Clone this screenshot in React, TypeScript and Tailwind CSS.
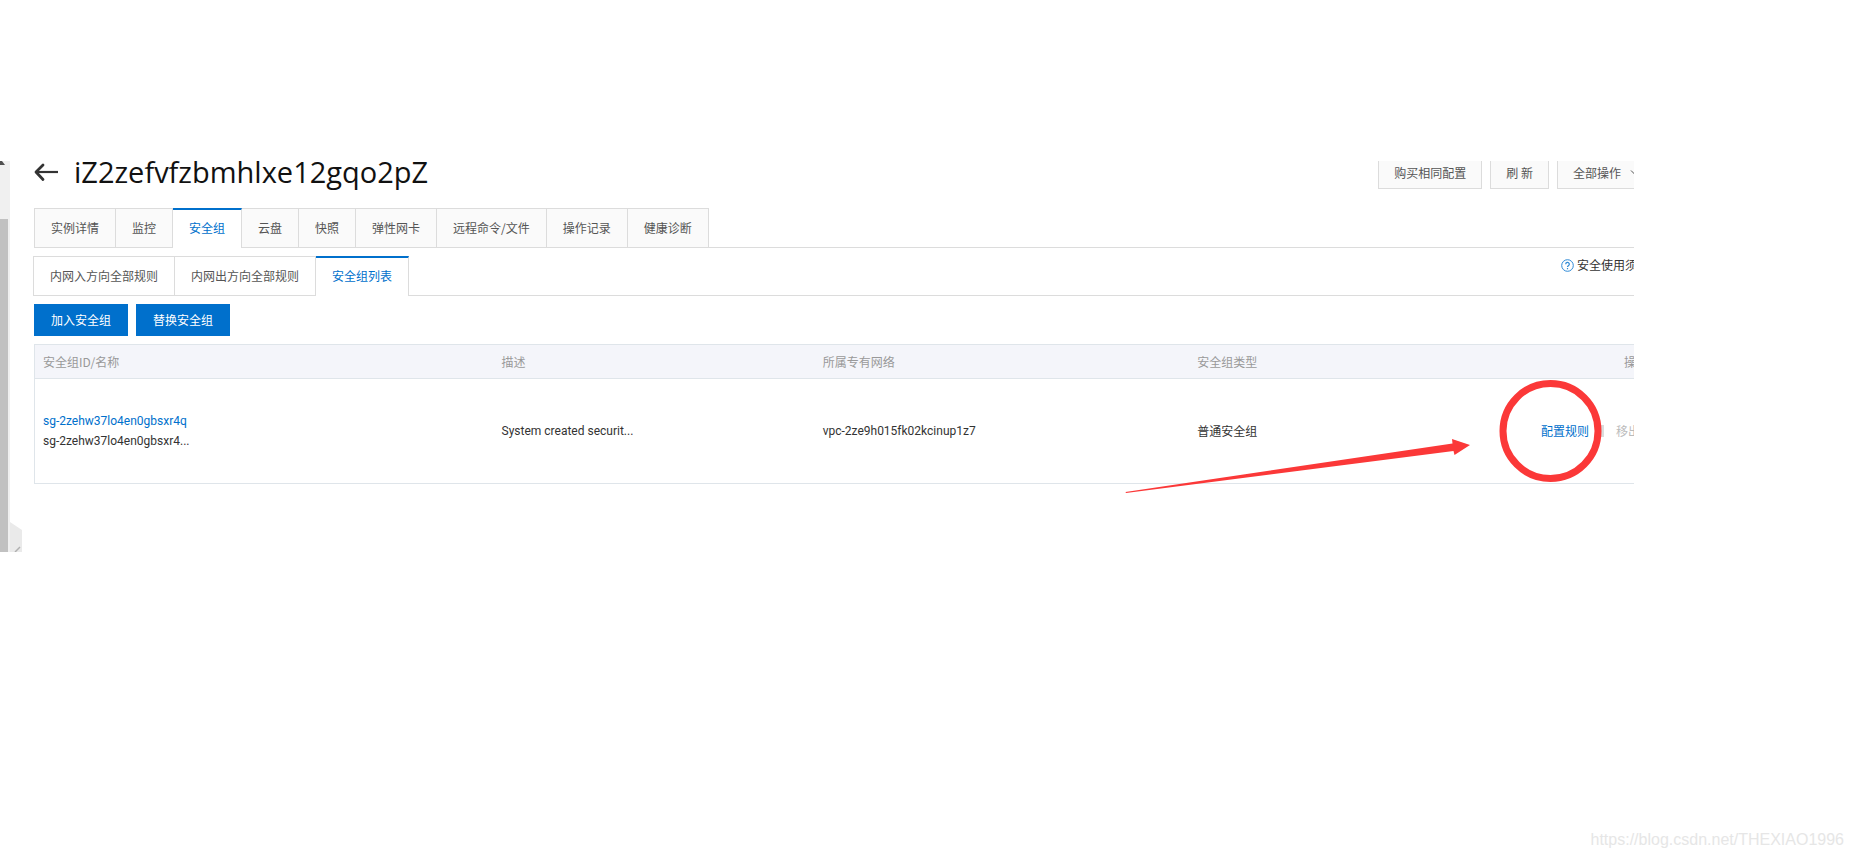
import { useState } from "react";
import clsx from "clsx";

const mainTabs = ["实例详情", "监控", "安全组", "云盘", "快照", "弹性网卡", "远程命令/文件", "操作记录", "健康诊断"];
const subTabs = ["内网入方向全部规则", "内网出方向全部规则", "安全组列表"];

const groups = [
    {
        id: "sg-2zehw37lo4en0gbsxr4q",
        name: "sg-2zehw37lo4en0gbsxr4...",
        desc: "System created securit...",
        vpc: "vpc-2ze9h015fk02kcinup1z7",
        type: "普通安全组",
    },
];

type TabsProps = {
    items: string[];
    active: string;
    onChange: (item: string) => void;
    plain?: boolean;
};

// Tab bar, the active tab covers the bottom line
const Tabs = ({ items, active, onChange, plain }: TabsProps) => (
    <div role="tablist" className={clsx("flex h-10 border-b border-[#dcdcdc]", plain && "-ml-px")}>
        {items.map((item) => (
            <button
                key={item}
                role="tab"
                aria-selected={item === active}
                onClick={() => onChange(item)}
                className={clsx(
                    "h-10 border-r border-[#dcdcdc] px-4 first:border-l",
                    item === active
                        ? "border-t-2 border-t-[#0070cc] bg-white pb-0.5 text-[#0070cc]"
                        : "border-y text-[#555]",
                    item !== active && (plain ? "bg-white" : "bg-[#fafafa]")
                )}
            >
                {item}
            </button>
        ))}
    </div>
);

// Left scrollbar and the collapse handle of the side menu
const SideRail = () => (
    <div className="flex w-[22px] shrink-0">
        <div className="flex w-[10px] flex-col bg-[#f0f0f0]">
            <svg width="10" height="58" className="shrink-0" aria-hidden="true">
                <path d="M0 0h2l3 4H0z" fill="#505050" />
            </svg>
            <div className="w-2 grow bg-[#c1c1c1]" />
        </div>
        <svg width="12" height="30" className="self-end" aria-hidden="true">
            <path d="M0 0l12 8v22H0z" fill="#eaeaea" />
            <path d="M5 30l5-5" stroke="#b0b0b0" strokeWidth="1.5" />
        </svg>
    </div>
);

const Header = () => (
    <header className="flex h-[47px] justify-between">
        <div className="flex items-start">
            <a href="#back" aria-label="返回" className="mt-0.5 mr-[15px]">
                <svg width="25" height="19" viewBox="0 0 25 19" fill="none">
                    <path d="M9 2L2 9l7 7.500" stroke="#333" strokeWidth="2.800" strokeLinecap="round" strokeLinejoin="round" />
                    <path d="M3 9h21" stroke="#333" strokeWidth="2.200" />
                </svg>
            </a>
            <h1 className="-mt-[9px] font-['Open_Sans',sans-serif] text-[29px] leading-10 text-[#111]">iZ2zefvfzbmhlxe12gqo2pZ</h1>
        </div>
        <div className="-mt-1 flex gap-2 text-[#555]">
            <button className="h-8 border border-[#dcdcdc] bg-[#fafafa] px-[15px]">购买相同配置</button>
            <button className="h-8 border border-[#dcdcdc] bg-[#fafafa] px-[15px]">刷 新</button>
            <button className="flex h-8 items-center gap-2 border border-[#dcdcdc] bg-[#fafafa] px-[15px]">
                全部操作
                <svg width="12" height="8" viewBox="0 0 12 8" fill="none" stroke="#555" aria-hidden="true">
                    <path d="M2 1.500l4 4 4-4" />
                </svg>
            </button>
        </div>
    </header>
);

const GroupTable = () => (
    <table className="w-full table-fixed border border-[#dfe5ea] text-left">
        <colgroup>
            <col className="w-[28.300%]" />
            <col className="w-[19.800%]" />
            <col className="w-[23.100%]" />
            <col className="w-[14%]" />
            <col />
        </colgroup>
        <thead>
            <tr className="h-[34px] border-b border-[#dfe5ea] bg-[#f4f5fa] text-[#999]">
                <th className="px-2 font-normal">安全组ID/名称</th>
                <th className="px-2 font-normal">描述</th>
                <th className="px-2 font-normal">所属专有网络</th>
                <th className="px-2 font-normal">安全组类型</th>
                <th className="px-2 text-right font-normal">操作</th>
            </tr>
        </thead>
        <tbody>
            {groups.map((group) => (
                <tr key={group.id} className="h-[105px] text-[#333]">
                    <td className="px-2 font-[Roboto,sans-serif] leading-5">
                        <a href="#group" className="block text-[#0070cc]">{group.id}</a>
                        <p>{group.name}</p>
                    </td>
                    <td className="px-2 font-[Roboto,sans-serif]">{group.desc}</td>
                    <td className="px-2 font-[Roboto,sans-serif]">{group.vpc}</td>
                    <td className="px-2">{group.type}</td>
                    <td className="px-4">
                        <div className="flex items-center justify-end">
                            <a href="#rules" className="text-[#0070cc]">配置规则</a>
                            <span className="mx-3 h-3 w-[3px] bg-[#dcdcdc]" />
                            <button disabled className="text-[#bbb]">移出</button>
                        </div>
                    </td>
                </tr>
            ))}
        </tbody>
    </table>
);

// Red arrow and circle drawn over the 配置规则 link
const Marker = () => (
    <svg
        className="pointer-events-none absolute top-[209px] right-6"
        width="490"
        height="130"
        viewBox="1120 370 490 130"
        fill="none"
        aria-hidden="true"
    >
        <path d="M1125.500 492L1452.500 443.500 1452 439 1470 445 1454.500 455 1453.500 451 1126 493z" fill="#fb3838" />
        <circle cx="1550.500" cy="431" r="47.500" stroke="#fb3838" strokeWidth="7" />
    </svg>
);

const App = () => {
    const [tab, setTab] = useState("安全组");
    const [subTab, setSubTab] = useState("安全组列表");

    return (
        <div className="flex min-h-screen flex-col bg-white pt-[161px] font-['Noto_Sans_CJK_SC',sans-serif] text-xs">
            <div className="relative mr-[218px] flex overflow-hidden">
                <SideRail />
                <main className="-mr-[23px] ml-3 grow pb-[68px]">
                    <Header />
                    <Tabs items={mainTabs} active={tab} onChange={setTab} />
                    <div className="mt-2 flex">
                        <div className="grow">
                            <Tabs items={subTabs} active={subTab} onChange={setSubTab} plain />
                        </div>
                        <a href="#help" className="-ml-24 flex h-[18px] w-24 items-center gap-[3px] text-[#333]">
                            <svg width="13" height="13" viewBox="0 0 13 13" fill="none" stroke="#2f8ad6" aria-hidden="true">
                                <circle cx="6.500" cy="6.500" r="5.800" />
                                <path d="M4.700 5.200a1.800 1.800 0 1 1 2.700 1.500c-.6.400-.9.700-.9 1.300M6.500 9v1.200" strokeWidth="1.200" />
                            </svg>
                            安全使用须知
                        </a>
                    </div>
                    <div className="my-2 flex gap-2 text-white">
                        <button className="h-8 bg-[#0070cc] px-[17px]">加入安全组</button>
                        <button className="h-8 bg-[#0070cc] px-[17px]">替换安全组</button>
                    </div>
                    <GroupTable />
                </main>
                <Marker />
            </div>
            <footer className="mt-auto pr-2 pb-1.5 text-right font-['Liberation_Sans',sans-serif] text-base text-[#e6e6e6]">
                https://blog.csdn.net/THEXIAO1996
            </footer>
        </div>
    );
};

export default App;
